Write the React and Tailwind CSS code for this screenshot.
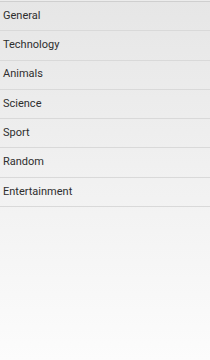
export default function App() {
  const items = ["General", "Technology", "Animals", "Science", "Sport", "Random", "Entertainment"];
  return (
    <div className="w-[210px] h-[360px] bg-gradient-to-b from-[#e6e6e6] to-[#fcfcfc] flex flex-col" style={{ fontFamily: "Roboto, 'Liberation Sans', sans-serif" }}>
      <div className="h-[1px] bg-[#ececec]" />
      <div className="h-[1px] bg-[#cfcfcf]" />
      {items.map((t) => (
        <div key={t} className="h-[29.3px] shrink-0 flex items-center pl-[3px] text-[11px] text-[#2e2e2e] border-b border-[#d9d9d9]">
          {t}
        </div>
      ))}
    </div>
  );
}
